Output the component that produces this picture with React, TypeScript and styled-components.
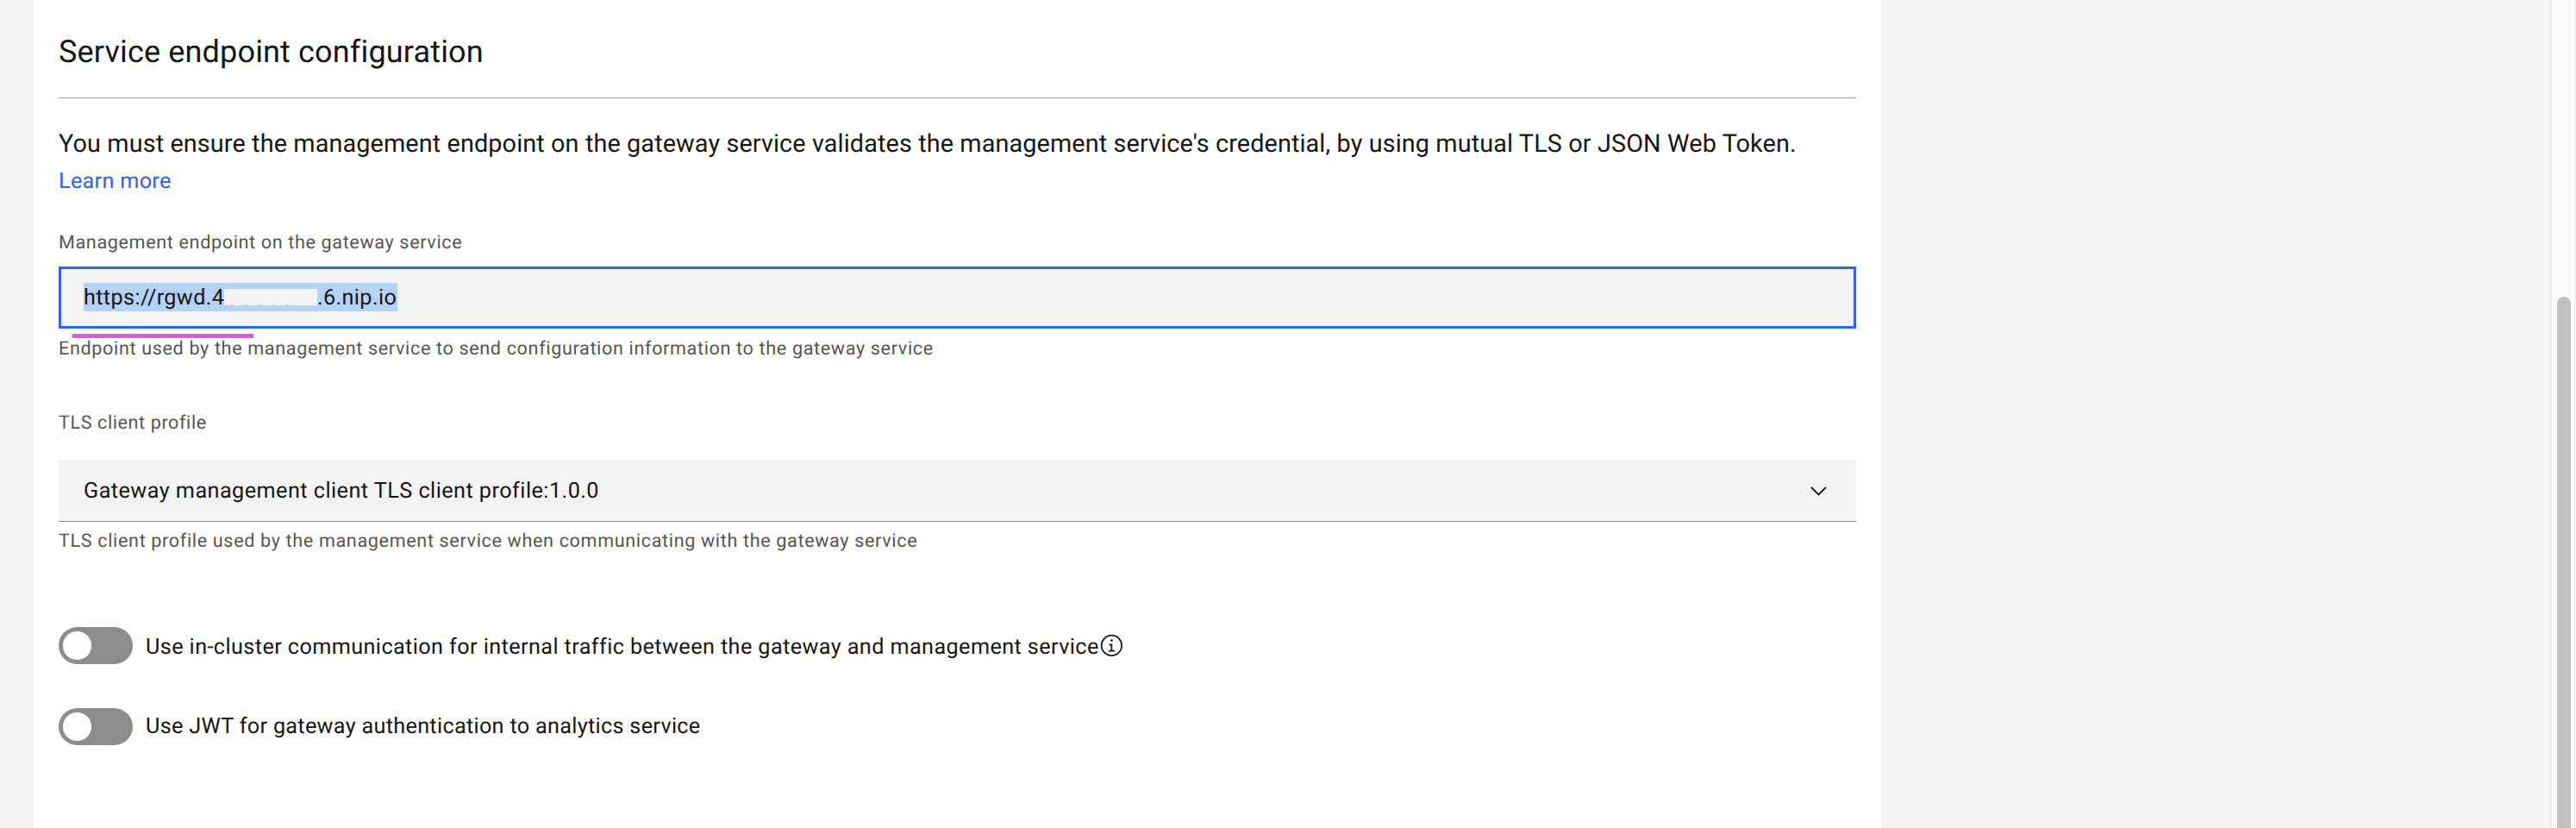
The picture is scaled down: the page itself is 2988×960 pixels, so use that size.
import React from 'react';
import styled, { createGlobalStyle } from 'styled-components';

const GlobalStyle = createGlobalStyle`
  * { box-sizing: border-box; }
  body {
    margin: 0;
    background: #f3f3f3;
    color: #161616;
    font-family: Roboto, "Liberation Sans", sans-serif;
    font-kerning: normal;
    text-rendering: geometricPrecision;
  }
`;

const Page = styled.div`
  display: flex;
  height: 960px;
  overflow: hidden;
  padding-left: 39px;
`;

const Panel = styled.main`
  width: 2143px;
  padding: 0 29px;
  background: #fff;
`;

const SectionHeader = styled.header`
  height: 114px;
  padding-top: 36px;
  border-bottom: 1px solid #a0a0a0;
  box-shadow: 0 1px #f7f7f7;
`;

const Title = styled.h2`
  margin: 0;
  font-size: 36px;
  font-weight: 400;
  line-height: 48px;
  letter-spacing: 0.16px;
`;

const Intro = styled.p`
  margin: 31px 0 0;
  font-size: 28.8px;
  line-height: 44px;
  letter-spacing: 0.12px;
  white-space: nowrap;
`;

const LearnMore = styled.a`
  display: block;
  width: max-content;
  color: #2d61f8;
  font-size: 25.2px;
  line-height: 44px;
  letter-spacing: 0.32px;
  text-decoration: none;
`;

const Field = styled.section<{ $top: number }>`
  margin-top: ${(p) => p.$top}px;
`;

const Caption = styled.div<{ $top?: number; $spacing: number }>`
  margin-top: ${(p) => p.$top ?? 0}px;
  color: #565656;
  font-size: 21.6px;
  line-height: 32px;
  letter-spacing: ${(p) => p.$spacing}px;
  white-space: nowrap;
`;

const TextInput = styled.div`
  position: relative;
  display: flex;
  align-items: center;
  height: 72px;
  margin-top: 11px;
  padding: 0 26px;
  border: 3px solid #2d61f8;
  background: #f3f3f3;
  font-size: 25.2px;
  letter-spacing: 0.38px;
`;

const SelectedText = styled.span`
  display: flex;
  width: 364px;
  height: 33px;
  margin-top: -1px;
  background: #b5d2f8;
  line-height: 36px;
`;

const HiddenPart = styled.span`
  display: flex;
  align-items: flex-end;
  width: 108px;
  height: 19px;
  margin: 7px 0 0;
  padding-left: 7px;
  gap: 12px;
  background: #f3f3f3;
`;

const Speck = styled.i`
  width: 4px;
  height: 1px;
  background: #d3d7db;
`;

const UrlPart = styled.span<{ $width: number }>`
  width: ${(p) => p.$width}px;
  white-space: nowrap;
`;

const Underline = styled.span`
  position: absolute;
  left: 13px;
  top: 75px;
  width: 210px;
  height: 5px;
  background: #e852f4;
`;

const Select = styled.div`
  display: flex;
  align-items: center;
  justify-content: space-between;
  height: 72px;
  margin-top: 26px;
  padding: 3px 34px 0 29px;
  border-bottom: 1px solid #8d8d8d;
  background: #f3f3f3;
  font-size: 25.2px;
  line-height: 34px;
  letter-spacing: 0.47px;
`;

const ToggleList = styled.div`
  display: flex;
  flex-direction: column;
  gap: 51px;
  margin-top: 83px;
`;

const ToggleRow = styled.div`
  display: flex;
  align-items: center;
  height: 43px;
`;

const Track = styled.span`
  display: flex;
  flex: none;
  align-items: center;
  width: 86px;
  height: 43px;
  padding-left: 5.4px;
  border-radius: 22px;
  background: #8d8d8d;
`;

const Knob = styled.span`
  width: 32.4px;
  height: 32.4px;
  border-radius: 50%;
  background: #fff;
`;

const ToggleLabel = styled.span<{ $spacing: number; $drop: number }>`
  margin-left: 15px;
  padding-top: ${(p) => p.$drop}px;
  font-size: 25.2px;
  line-height: 34px;
  letter-spacing: ${(p) => p.$spacing}px;
  white-space: nowrap;
`;

const Icon = styled.svg`
  display: block;
  flex: none;
`;

const Chevron = styled(Icon)`
  margin-bottom: 2px;
`;

const ScrollTrack = styled.aside`
  width: 28px;
  height: 960px;
  margin: 0 2px 0 auto;
  padding: 344px 4px 0 6px;
  border-left: 2px solid #e8e8e8;
  background: #fafafa;
  box-shadow: 2px 0 #efefef;
`;

const ScrollThumb = styled.div`
  height: 640px;
  border-radius: 8px;
  background: #c1c1c1;
`;

const ChevronDown = () => (
  <Chevron width="19" height="11" viewBox="0 0 19 11">
    <path d="M0.8 0.9 L9.4 9.4 L18 0.9" fill="none" stroke="#161616" strokeWidth="1.9" />
  </Chevron>
);

const InfoIcon = () => (
  <Icon width="28.8" height="28.8" viewBox="0 0 32 32">
    <path
      fill="#161616"
      d="M17 22v-8h-4v2h2v6h-3v2h8v-2zM16 8a1.5 1.5 0 1 0 1.5 1.5A1.5 1.5 0 0 0 16 8zM16 30a14 14 0 1 1 14-14 14 14 0 0 1-14 14zm0-26a12 12 0 1 0 12 12A12 12 0 0 0 16 4z"
    />
  </Icon>
);

const Toggle = ({ label, spacing, drop, info = false }: { label: string; spacing: number; drop: number; info?: boolean }) => (
  <ToggleRow>
    <Track><Knob /></Track>
    <ToggleLabel $spacing={spacing} $drop={drop}>{label}</ToggleLabel>
    {info && <InfoIcon />}
  </ToggleRow>
);

export default function App() {
  return (
    <>
      <GlobalStyle />
      <Page>
        <Panel>
          <SectionHeader>
            <Title>Service endpoint configuration</Title>
          </SectionHeader>
          <Intro>
            You must ensure the management endpoint on the gateway service validates the management service's credential, by using mutual TLS or JSON Web Token.
          </Intro>
          <LearnMore>Learn more</LearnMore>

          <Field $top={33}>
            <Caption $spacing={0.63}>Management endpoint on the gateway service</Caption>
            <TextInput>
              <SelectedText>
                <UrlPart $width={163}>https://rgwd.4</UrlPart>
                <HiddenPart>
                  <Speck /><Speck /><Speck /><Speck /><Speck />
                </HiddenPart>
                <UrlPart $width={93}>.6.nip.io</UrlPart>
              </SelectedText>
              <Underline />
            </TextInput>
            <Caption $top={8} $spacing={0.64}>
              Endpoint used by the management service to send configuration information to the gateway service
            </Caption>
          </Field>

          <Field $top={54}>
            <Caption $spacing={0.58}>TLS client profile</Caption>
            <Select>
              Gateway management client TLS client profile:1.0.0
              <ChevronDown />
            </Select>
            <Caption $top={7} $spacing={0.64}>
              TLS client profile used by the management service when communicating with the gateway service
            </Caption>
          </Field>

          <ToggleList>
            <Toggle label="Use in-cluster communication for internal traffic between the gateway and management service" spacing={0.42} drop={4} info />
            <Toggle label="Use JWT for gateway authentication to analytics service" spacing={0.32} drop={1} />
          </ToggleList>
        </Panel>
        <ScrollTrack>
          <ScrollThumb />
        </ScrollTrack>
      </Page>
    </>
  );
}
